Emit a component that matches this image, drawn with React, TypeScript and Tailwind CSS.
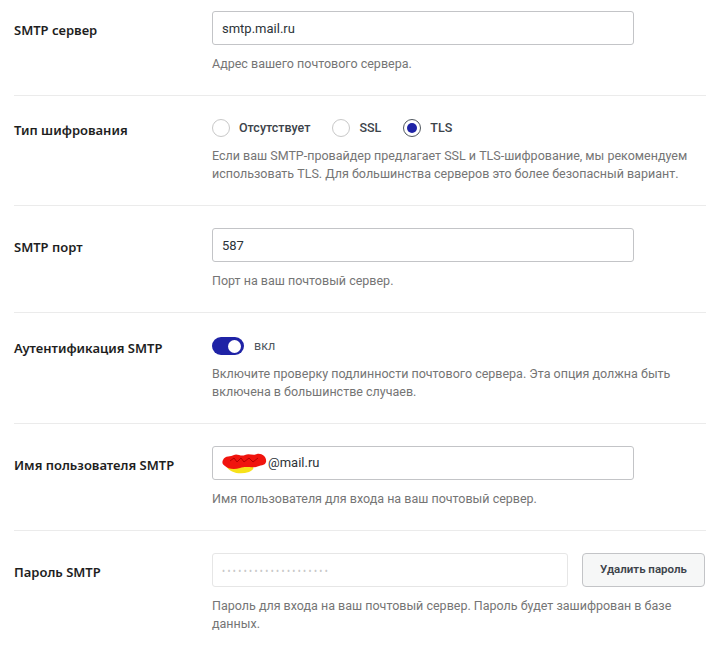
import React, { useState } from "react";

const font = { fontFamily: '"Noto Sans", "Open Sans", Arial, sans-serif' };
const roboto = { fontFamily: 'Roboto, "Noto Sans", Arial, sans-serif' };

function Row({
    label,
    children,
    last,
    first,
    controlH = "h-[34px]",
}: {
    label: string;
    children: React.ReactNode;
    last?: boolean;
    first?: boolean;
    controlH?: string;
}) {
    return (
        <div
            className={
                "flex mr-[11px] " +
                (first ? "pt-[11px] " : "pt-[22px] ") +
                (last ? "pb-[10px]" : "pb-[22px] border-b border-[#ebebeb]")
            }
        >
            <div
                className={
                    "w-[198px] shrink-0 flex items-center text-[13px] font-semibold text-[#1e1e1e] pt-[5px] " + controlH
                }
            >
                {label}
            </div>
            <div className="flex-1">{children}</div>
        </div>
    );
}

function Help({ children, gap = "mt-[10px]" }: { children: React.ReactNode; gap?: string }) {
    return (
        <p className={gap + " text-[12.5px] leading-[18px] text-[#757575]"} style={roboto}>
            {children}
        </p>
    );
}

function Radio({ checked, label, onClick }: { checked: boolean; label: string; onClick: () => void }) {
    return (
        <button type="button" onClick={onClick} className="flex items-center gap-[9px]">
            <span
                className={
                    "w-[18px] h-[18px] rounded-full border flex items-center justify-center bg-white " +
                    (checked ? "border-[#50575e]" : "border-[#c8c8c8]")
                }
            >
                {checked && <span className="w-[10px] h-[10px] rounded-full bg-[#1f23a6]" />}
            </span>
            <span className="text-[12.5px] font-medium text-[#3c434a]" style={roboto}>
                {label}
            </span>
        </button>
    );
}

// redaction scribble over the username
function Scribble() {
    return (
        <svg width="46" height="22" viewBox="0 0 46 22" className="shrink-0">
            <path d="M4 14 C8 21 18 23 27 20 C31 18 33 16 30 14 Z" fill="#f7e21a" />
            <path
                d="M1 8 C3 3 9 5 12 3 C15 1 19 5 23 3 C27 1 31 4 35 2 C40 1 45 5 44 10 C43 14 38 13 34 15 C28 16 24 14 18 16 C12 18 6 17 3 14 C0 12 0 10 1 8 Z"
                fill="#f0140e"
            />
            <path d="M8 9 L12 6 L15 10 L19 6 L22 10 L27 6 L31 10 L36 6" stroke="#b30000" strokeWidth="1" fill="none" />
        </svg>
    );
}

const inputCls =
    "w-[422px] h-[34px] px-[9px] border border-[#c3c4c7] rounded-[3px] text-[13px] text-[#2c3338] outline-none";

export default function App() {
    const [enc, setEnc] = useState("tls");
    const [auth, setAuth] = useState(true);

    return (
        <div className="bg-white min-h-[645px] w-[717px] pl-[14px]" style={font}>
            <Row label="SMTP сервер" first>
                <input defaultValue="smtp.mail.ru" className={inputCls} style={roboto} />
                <Help>Адрес вашего почтового сервера.</Help>
            </Row>

            <Row label="Тип шифрования" controlH="h-[20px]">
                <div className="h-[20px] flex items-center gap-[22px]">
                    <Radio checked={enc === "none"} label="Отсутствует" onClick={() => setEnc("none")} />
                    <Radio checked={enc === "ssl"} label="SSL" onClick={() => setEnc("ssl")} />
                    <Radio checked={enc === "tls"} label="TLS" onClick={() => setEnc("tls")} />
                </div>
                <Help gap="mt-[9px]">
                    Если ваш SMTP-провайдер предлагает SSL и TLS-шифрование, мы рекомендуем
                    <br />
                    использовать TLS. Для большинства серверов это более безопасный вариант.
                </Help>
            </Row>

            <Row label="SMTP порт">
                <input defaultValue="587" className={inputCls} style={roboto} />
                <Help>Порт на ваш почтовый сервер.</Help>
            </Row>

            <Row label="Аутентификация SMTP" controlH="h-[22px]">
                <div className="h-[22px] flex items-center gap-[10px]">
                    <button
                        type="button"
                        onClick={() => setAuth(!auth)}
                        className={
                            "w-[32px] h-[18px] rounded-full flex items-center px-[3px] " +
                            (auth ? "bg-[#1f23a6] justify-end" : "bg-[#c3c4c7] justify-start")
                        }
                    >
                        <span className="w-[13px] h-[13px] rounded-full bg-white" />
                    </button>
                    <span className="text-[12.5px] text-[#50575e]" style={roboto}>
                        вкл
                    </span>
                </div>
                <Help gap="mt-[8px]">
                    Включите проверку подлинности почтового сервера. Эта опция должна быть
                    <br />
                    включена в большинстве случаев.
                </Help>
            </Row>

            <Row label="Имя пользователя SMTP">
                <div className="w-[422px] h-[34px] pl-[9px] border border-[#c3c4c7] rounded-[3px] flex items-center">
                    <Scribble />
                    <span className="text-[13px] text-[#2c3338]" style={roboto}>
                        @mail.ru
                    </span>
                </div>
                <Help>Имя пользователя для входа на ваш почтовый сервер.</Help>
            </Row>

            <Row label="Пароль SMTP" last>
                <div className="flex gap-[14px]">
                    <input
                        type="password"
                        disabled
                        placeholder="••••••••••••••••••••"
                        className="w-[356px] h-[34px] px-[9px] border border-[#e6e6e6] rounded-[3px] text-[8px] tracking-[2.4px] bg-white placeholder:text-[#c8c8c8] outline-none"
                    />
                    <button
                        type="button"
                        className="w-[123px] h-[34px] border border-[#c3c4c7] rounded-[4px] bg-[#f6f7f7] text-[11.5px] font-semibold text-[#3c434a]"
                        style={roboto}
                    >
                        Удалить пароль
                    </button>
                </div>
                <Help>
                    Пароль для входа на ваш почтовый сервер. Пароль будет зашифрован в базе
                    <br />
                    данных.
                </Help>
            </Row>
        </div>
    );
}
